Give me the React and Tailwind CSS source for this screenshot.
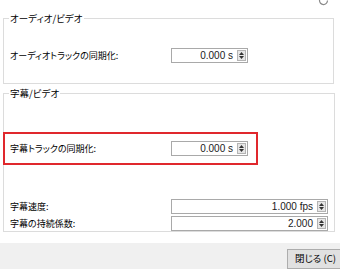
import React from "react";

const jp = "font-['Noto_Sans_CJK_JP',sans-serif] [font-feature-settings:'palt']";

const Spin = ({ value, wide }) => (
  <div className={`flex h-[15px] items-center border border-[#a9a9a9] bg-white ${wide ? "w-[157px]" : "w-[77px]"}`}>
    <span className="flex-1 pr-[4px] text-right font-['Liberation_Sans_Narrow','Liberation_Sans',sans-serif] text-[10px] leading-none text-[#1a1a1a]">
      {value}
    </span>
    <div className="mr-[1px] flex h-[11px] w-[9px] flex-col items-center justify-center gap-[1px] border border-[#b4b4b4] bg-[#e6e6e6]">
      <svg width="5" height="3" viewBox="0 0 5 3">
        <path d="M0 3 L2.5 0 L5 3 Z" fill="#333" />
      </svg>
      <svg width="5" height="3" viewBox="0 0 5 3">
        <path d="M0 0 L2.5 3 L5 0 Z" fill="#333" />
      </svg>
    </div>
  </div>
);

const Row = ({ label, value, wide }) => (
  <div className="flex items-center">
    <span className={`w-[161px] text-[9px] leading-none text-black ${jp}`}>{label}</span>
    <Spin value={value} wide={wide} />
  </div>
);

export default function App() {
  return (
    <div className="flex h-[269px] w-[340px] flex-col overflow-hidden bg-white">
      <div className="flex h-[11px] justify-end pr-[11px]">
        <svg width="11" height="11" viewBox="0 0 11 11" className="-mt-[5px]">
          <path d="M9.5 5.5 A4 4 0 1 1 6 1.6" fill="none" stroke="#8a8a8a" strokeWidth="1.2" />
        </svg>
      </div>

      <fieldset className="ml-[3px] h-[79px] w-[331px] border border-[#dcdcdc] px-[6px]">
        <legend className={`ml-[-1px] px-[1px] text-[9.5px] leading-[16px] text-black ${jp}`}>
          オーディオ/ビデオ
        </legend>
        <div className="mt-[22px]">
          <Row label="オーディオトラックの同期化:" value="0.000 s" />
        </div>
      </fieldset>

      <fieldset className="ml-[3px] mt-[1px] h-[157px] w-[331px] border border-[#dcdcdc] px-[6px]">
        <legend className={`ml-[-1px] px-[1px] text-[9.5px] leading-[16px] text-black ${jp}`}>
          字幕/ビデオ
        </legend>
        <div className="ml-[-7px] mt-[31px] flex h-[33px] w-[255px] items-center border-2 border-[#e0282d] pl-[5px]">
          <Row label="字幕トラックの同期化:" value="0.000 s" />
        </div>
        <div className="mt-[34px] flex flex-col gap-[2px]">
          <Row label="字幕速度:" value="1.000 fps" wide />
          <Row label="字幕の持続係数:" value="2.000" wide />
        </div>
      </fieldset>

      <div className="mt-[11px] flex flex-1 items-start justify-end bg-[#f0f0f0] pt-[6px]">
        <button className={`h-[20px] w-[55px] -mr-[2px] border border-[#adadad] bg-[#e1e1e1] text-left pl-[7px] text-[9.5px] leading-none text-black ${jp}`}>
          閉じる (C)
        </button>
      </div>
    </div>
  );
}
